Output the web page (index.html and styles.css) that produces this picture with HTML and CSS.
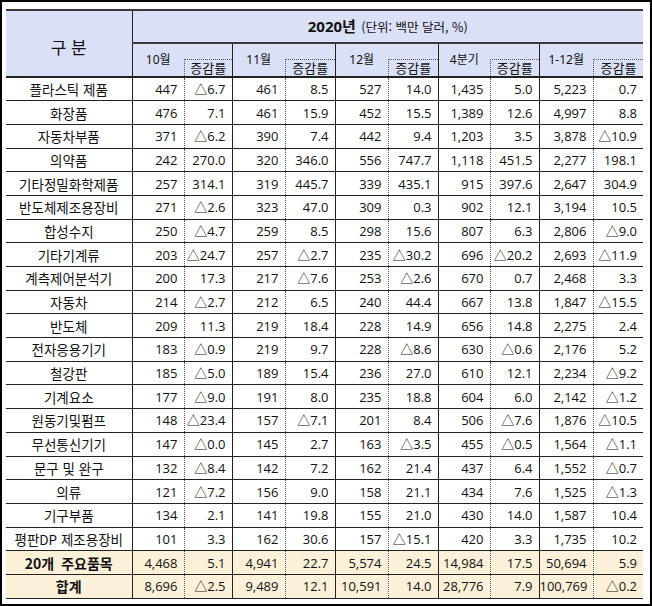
FILE: index.html
```html
<!DOCTYPE html>
<html lang="ko">
<head>
<meta charset="utf-8">
<title>2020년 주요 품목 수출</title>
<link rel="stylesheet" href="styles.css">
</head>
<body>
<div class="frame">
<table class="stats">
<colgroup>
<col class="c-label">
<col class="c-v1"><col class="c-r1">
<col class="c-v2"><col class="c-r2">
<col class="c-v3"><col class="c-r3">
<col class="c-v4"><col class="c-r4">
<col class="c-v5"><col class="c-r5">
</colgroup>
<thead>
<tr class="h1">
<th class="corner" rowspan="2">구 분</th>
<th class="year" colspan="10"><span class="yr">2020년</span> <span class="unit">(단위: 백만 달러, %)</span></th>
</tr>
<tr class="h2">
<th class="mth">10월</th><th class="rth"><div class="rate-box">증감률</div></th>
<th class="mth">11월</th><th class="rth"><div class="rate-box">증감률</div></th>
<th class="mth">12월</th><th class="rth"><div class="rate-box">증감률</div></th>
<th class="mth">4분기</th><th class="rth"><div class="rate-box">증감률</div></th>
<th class="mth">1-12월</th><th class="rth"><div class="rate-box">증감률</div></th>
</tr>
</thead>
<tbody>
<tr><th class="lbl">플라스틱 제품</th><td>447</td><td class="r">△6.7</td><td>461</td><td class="r">8.5</td><td>527</td><td class="r">14.0</td><td>1,435</td><td class="r">5.0</td><td>5,223</td><td class="r">0.7</td></tr>
<tr><th class="lbl">화장품</th><td>476</td><td class="r">7.1</td><td>461</td><td class="r">15.9</td><td>452</td><td class="r">15.5</td><td>1,389</td><td class="r">12.6</td><td>4,997</td><td class="r">8.8</td></tr>
<tr><th class="lbl">자동차부품</th><td>371</td><td class="r">△6.2</td><td>390</td><td class="r">7.4</td><td>442</td><td class="r">9.4</td><td>1,203</td><td class="r">3.5</td><td>3,878</td><td class="r">△10.9</td></tr>
<tr><th class="lbl">의약품</th><td>242</td><td class="r">270.0</td><td>320</td><td class="r">346.0</td><td>556</td><td class="r">747.7</td><td>1,118</td><td class="r">451.5</td><td>2,277</td><td class="r">198.1</td></tr>
<tr><th class="lbl">기타정밀화학제품</th><td>257</td><td class="r">314.1</td><td>319</td><td class="r">445.7</td><td>339</td><td class="r">435.1</td><td>915</td><td class="r">397.6</td><td>2,647</td><td class="r">304.9</td></tr>
<tr><th class="lbl">반도체제조용장비</th><td>271</td><td class="r">△2.6</td><td>323</td><td class="r">47.0</td><td>309</td><td class="r">0.3</td><td>902</td><td class="r">12.1</td><td>3,194</td><td class="r">10.5</td></tr>
<tr><th class="lbl">합성수지</th><td>250</td><td class="r">△4.7</td><td>259</td><td class="r">8.5</td><td>298</td><td class="r">15.6</td><td>807</td><td class="r">6.3</td><td>2,806</td><td class="r">△9.0</td></tr>
<tr><th class="lbl">기타기계류</th><td>203</td><td class="r">△24.7</td><td>257</td><td class="r">△2.7</td><td>235</td><td class="r">△30.2</td><td>696</td><td class="r">△20.2</td><td>2,693</td><td class="r">△11.9</td></tr>
<tr><th class="lbl">계측제어분석기</th><td>200</td><td class="r">17.3</td><td>217</td><td class="r">△7.6</td><td>253</td><td class="r">△2.6</td><td>670</td><td class="r">0.7</td><td>2,468</td><td class="r">3.3</td></tr>
<tr><th class="lbl">자동차</th><td>214</td><td class="r">△2.7</td><td>212</td><td class="r">6.5</td><td>240</td><td class="r">44.4</td><td>667</td><td class="r">13.8</td><td>1,847</td><td class="r">△15.5</td></tr>
<tr><th class="lbl">반도체</th><td>209</td><td class="r">11.3</td><td>219</td><td class="r">18.4</td><td>228</td><td class="r">14.9</td><td>656</td><td class="r">14.8</td><td>2,275</td><td class="r">2.4</td></tr>
<tr><th class="lbl">전자응용기기</th><td>183</td><td class="r">△0.9</td><td>219</td><td class="r">9.7</td><td>228</td><td class="r">△8.6</td><td>630</td><td class="r">△0.6</td><td>2,176</td><td class="r">5.2</td></tr>
<tr><th class="lbl">철강판</th><td>185</td><td class="r">△5.0</td><td>189</td><td class="r">15.4</td><td>236</td><td class="r">27.0</td><td>610</td><td class="r">12.1</td><td>2,234</td><td class="r">△9.2</td></tr>
<tr><th class="lbl">기계요소</th><td>177</td><td class="r">△9.0</td><td>191</td><td class="r">8.0</td><td>235</td><td class="r">18.8</td><td>604</td><td class="r">6.0</td><td>2,142</td><td class="r">△1.2</td></tr>
<tr><th class="lbl">원동기및펌프</th><td>148</td><td class="r">△23.4</td><td>157</td><td class="r">△7.1</td><td>201</td><td class="r">8.4</td><td>506</td><td class="r">△7.6</td><td>1,876</td><td class="r">△10.5</td></tr>
<tr><th class="lbl">무선통신기기</th><td>147</td><td class="r">△0.0</td><td>145</td><td class="r">2.7</td><td>163</td><td class="r">△3.5</td><td>455</td><td class="r">△0.5</td><td>1,564</td><td class="r">△1.1</td></tr>
<tr><th class="lbl">문구 및 완구</th><td>132</td><td class="r">△8.4</td><td>142</td><td class="r">7.2</td><td>162</td><td class="r">21.4</td><td>437</td><td class="r">6.4</td><td>1,552</td><td class="r">△0.7</td></tr>
<tr><th class="lbl">의류</th><td>121</td><td class="r">△7.2</td><td>156</td><td class="r">9.0</td><td>158</td><td class="r">21.1</td><td>434</td><td class="r">7.6</td><td>1,525</td><td class="r">△1.3</td></tr>
<tr><th class="lbl">기구부품</th><td>134</td><td class="r">2.1</td><td>141</td><td class="r">19.8</td><td>155</td><td class="r">21.0</td><td>430</td><td class="r">14.0</td><td>1,587</td><td class="r">10.4</td></tr>
<tr><th class="lbl">평판DP 제조용장비</th><td>101</td><td class="r">3.3</td><td>162</td><td class="r">30.6</td><td>157</td><td class="r">△15.1</td><td>420</td><td class="r">3.3</td><td>1,735</td><td class="r">10.2</td></tr>
<tr class="sum"><th class="lbl">20개 주요품목</th><td>4,468</td><td class="r">5.1</td><td>4,941</td><td class="r">22.7</td><td>5,574</td><td class="r">24.5</td><td>14,984</td><td class="r">17.5</td><td>50,694</td><td class="r">5.9</td></tr>
<tr class="sum"><th class="lbl">합계</th><td>8,696</td><td class="r">△2.5</td><td>9,489</td><td class="r">12.1</td><td>10,591</td><td class="r">14.0</td><td>28,776</td><td class="r">7.9</td><td>100,769</td><td class="r">△0.2</td></tr>
</tbody>
</table>
</div>
</body>
</html>
```
FILE: styles.css
```css
html, body {
  margin: 0;
  padding: 0;
  background: #fff;
}

.frame {
  width: 652px;
  height: 606px;
  box-sizing: border-box;
  border: 2px solid #000;
  padding: 7px 0 0 4px;
  background: #fff;
}

.stats {
  width: 637px;
  table-layout: fixed;
  border-collapse: collapse;
  font-family: "Open Sans", "Noto Sans CJK KR", sans-serif;
  font-size: 13px;
  line-height: 16px;
  color: #111;
}

.c-label { width: 126px; }
.c-v1 { width: 52px; } .c-r1 { width: 48px; }
.c-v2 { width: 53px; } .c-r2 { width: 50px; }
.c-v3 { width: 53px; } .c-r3 { width: 50px; }
.c-v4 { width: 52px; } .c-r4 { width: 49px; }
.c-v5 { width: 54px; } .c-r5 { width: 50px; }

.stats th,
.stats td {
  padding: 0;
  font-weight: normal;
  white-space: nowrap;
  overflow: hidden;
}

/* header */
.stats thead th {
  background: #dae0f6;
}

.h1 {
  height: 33px;
}

.h1 th {
  border-top: 2px solid #3a3a3a;
  border-bottom: 2px solid #3a3a3a;
}

.corner {
  font-family: "Noto Sans CJK KR", sans-serif;
  font-size: 17px;
  text-align: center;
  vertical-align: middle;
  padding-top: 6px !important;
  border-right: 1px solid #222;
  border-bottom: 2px solid #222 !important;
}

.year {
  text-align: center;
  vertical-align: middle;
}

.yr {
  font-family: "Noto Sans", "Noto Sans CJK KR", sans-serif;
  font-weight: bold;
  font-size: 15px;
}

.unit {
  font-family: "Noto Sans CJK KR", sans-serif;
  font-size: 12.5px;
  margin-left: 2px;
}

.h2 {
  height: 34px;
}

.h2 th {
  border-bottom: 2px solid #222;
}

.mth {
  font-family: "Noto Sans", "Noto Sans CJK KR", sans-serif;
  font-size: 12px;
  text-align: center;
  vertical-align: top;
  padding-top: 8px !important;
  border-left: 1px solid #222;
}

.rth {
  vertical-align: bottom;
}

.rate-box {
  font-family: "Noto Sans CJK KR", sans-serif;
  font-size: 13px;
  height: 16px;
  line-height: 16px;
  text-align: center;
  border-top: 1px dotted #555;
  border-left: 1px dotted #555;
}

/* body */
.stats tbody tr {
  height: 23.7px;
}

.stats tbody th,
.stats tbody td {
  border-bottom: 1px solid #222;
}

.lbl {
  font-family: "Noto Sans CJK KR", sans-serif;
  font-size: 13.5px;
  text-align: center;
  vertical-align: middle;
  border-right: 1px solid #222;
}

.stats td {
  text-align: right;
  vertical-align: middle;
  padding-right: 6px;
  border-left: 1px solid #222;
}

.stats td.r {
  border-left: 1px dotted #555;
}

.sum th,
.sum td {
  background: #fdf0d8;
}

.sum .lbl {
  font-weight: bold;
  font-size: 14px;
  word-spacing: 3px;
}
```
